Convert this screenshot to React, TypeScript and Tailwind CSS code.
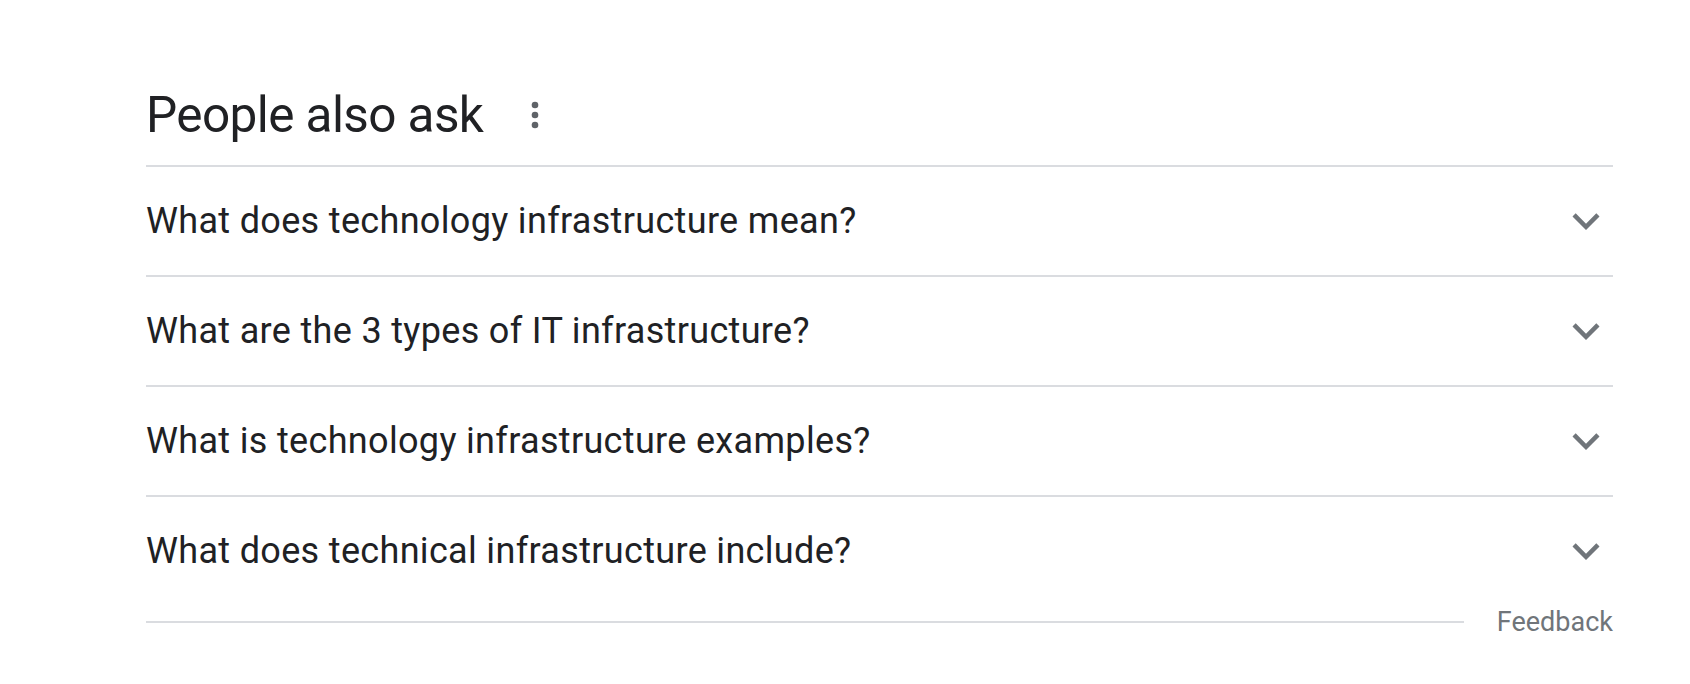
const questions = [
  'What does technology infrastructure mean?',
  'What are the 3 types of IT infrastructure?',
  'What is technology infrastructure examples?',
  'What does technical infrastructure include?',
]

function ChevronDown() {
  return (
    <svg viewBox="0 0 24 24" className="w-[54px] h-[54px] shrink-0" fill="#70757a">
      <path d="M16.59 8.59L12 13.17 7.41 8.59 6 10l6 6 6-6z" />
    </svg>
  )
}

function MoreVert() {
  return (
    <svg viewBox="0 0 24 24" className="w-[40px] h-[40px] shrink-0" fill="#5f6368">
      <circle cx="12" cy="6" r="2" />
      <circle cx="12" cy="12" r="2" />
      <circle cx="12" cy="18" r="2" />
    </svg>
  )
}

export default function App() {
  return (
    <div className="min-h-[684px] bg-white pl-[146px] font-['Roboto',sans-serif]">
      <div className="w-[1467px]">
        <div className="flex items-center pt-[83px] pb-[18px]">
          <h2 className="text-[49.5px] leading-[64px] tracking-[-0.6px] text-[#202124] font-normal">
            People also ask
          </h2>
          <button className="ml-[32px] flex items-center justify-center">
            <MoreVert />
          </button>
        </div>

        {questions.map((q) => (
          <div
            key={q}
            className="flex items-center justify-between border-t-2 border-[#dadce0] h-[110px]"
          >
            <span className="text-[36px] leading-[48px] tracking-[0.33px] text-[#202124]">{q}</span>
            <ChevronDown />
          </div>
        ))}

        <div className="flex items-center h-[34px]">
          <div className="flex-1 h-[2px] bg-[#dadce0]" />
          <span className="ml-[33px] text-[27px] leading-[34px] text-[#70757a]">Feedback</span>
        </div>
      </div>
    </div>
  )
}
